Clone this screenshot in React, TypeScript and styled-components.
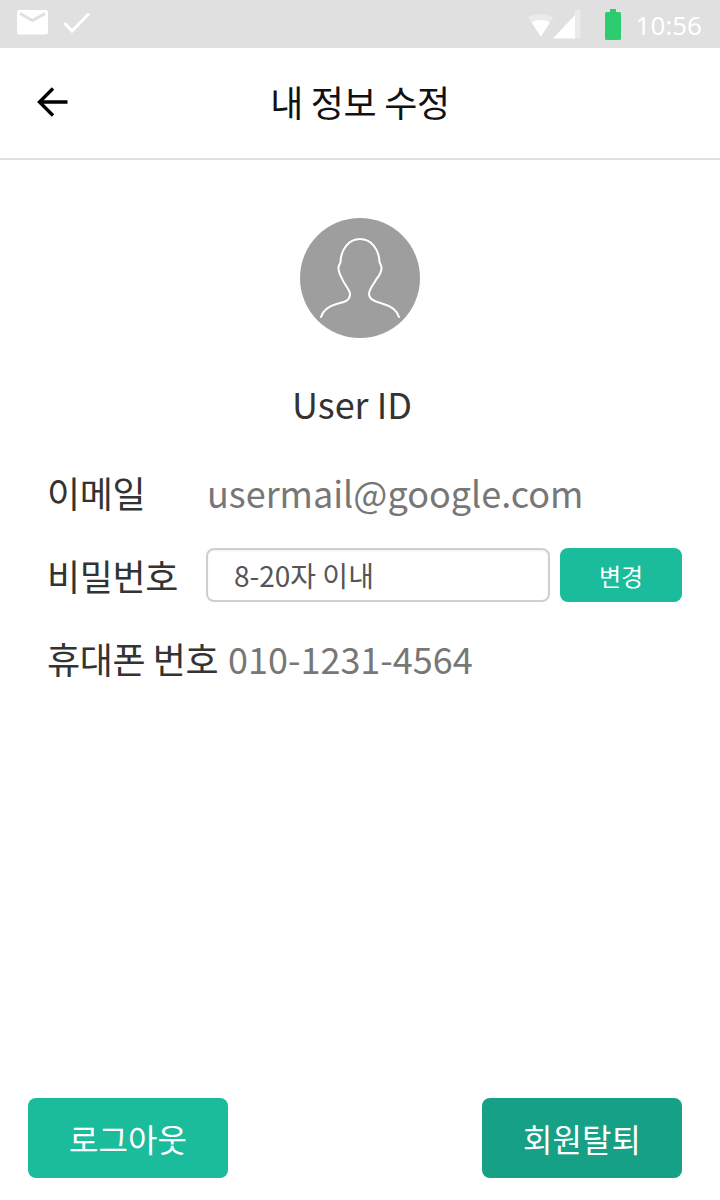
import React from "react";
import styled, { createGlobalStyle } from "styled-components";

const Global = createGlobalStyle`
  html, body { margin: 0; padding: 0; background: #fff; }
  * { box-sizing: border-box; }
`;
const Font = `"Noto Sans CJK KR", "Noto Sans", sans-serif`;

const Page = styled.div`
  width: 720px; height: 1200px; display: flex; flex-direction: column;
  font-family: ${Font}; background: #fff; overflow: hidden;
`;
const StatusBar = styled.div`
  height: 48px; background: #e0e0e0; display: flex; align-items: center;
  justify-content: space-between; padding: 0 18px 0 17px; flex: none;
`;
const StatusGroup = styled.div`display: flex; align-items: center;`;
const Clock = styled.span`
  font-family: "Noto Sans", sans-serif; font-size: 26px; color: #fff; line-height: 48px; margin-left: 15px; margin-top:2px;
`;
const Header = styled.header`
  height: 112px; flex: none; border-bottom: 2px solid #e0e0e0; display: flex; align-items: center;
  justify-content: center; position: relative; padding-bottom: 4px;
`;
const BackButton = styled.div`position: absolute; left: 36px; top: 37px; width: 34px; height: 34px; display: flex;`;
const Title = styled.h1`
  margin: 0 0 0 0; font-size: 36px; font-weight: 400; color: #111; line-height: 1; letter-spacing: -0.3px;
`;
const Profile = styled.section`
  display: flex; flex-direction: column; align-items: center; padding-top: 58px; flex: none;
`;
const Avatar = styled.div`
  width: 120px; height: 120px; border-radius: 50%; background: #9e9e9e; display: flex;
`;
const UserId = styled.div`
  font-size: 36px; color: #333; line-height: 50px; margin-top: 40px; margin-right: 16px;
`;
const Form = styled.div`display: flex; flex-direction: column; padding: 0 38px 0 47px; margin-top: 19px; flex: none;`;
const Row = styled.div<{ $h: number }>`display: flex; align-items: center; height: ${(p) => p.$h}px;`;
const Label = styled.div<{ $w: number }>`
  width: ${(p) => p.$w}px; flex: none; font-size: 36px; color: #333; white-space: nowrap; line-height: 50px; letter-spacing: -0.4px;
`;
const Value = styled.div`font-size: 36px; color: #777; line-height: 50px; white-space: nowrap;`;
const PasswordBox = styled.div`
  width: 344px; height: 54px; border: 2px solid #cfcfcf; border-radius: 8px; background: #fff;
  font-size: 28px; color: #555; display: flex; align-items: center; padding-left: 26px;
  box-shadow: inset 0 1px 2px rgba(0,0,0,0.06);
`;
const SmallButton = styled.div`
  width: 122px; height: 54px; margin-left: 10px; background: #1abc9c; border-radius: 8px; color: #fff;
  font-size: 24px; display: flex; align-items: center; justify-content: center;
`;
const Footer = styled.footer`
  margin-top: auto; display: flex; justify-content: space-between; padding: 0 38px 22px 28px;
`;
const ActionButton = styled.div<{ $bg: string }>`
  width: 200px; height: 80px; border-radius: 8px; background: ${(p) => p.$bg}; color: #fff;
  font-size: 32px; display: flex; align-items: center; justify-content: center;
`;

export default function App() {
  return (
    <Page>
      <Global />
      <StatusBar>
        <StatusGroup>
          <svg width="31" height="25" viewBox="0 0 31 25" style={{ marginTop: -4 }}>
            <rect x="0" y="0" width="31" height="24.5" rx="2.5" fill="#fff" />
            <path d="M3 3.5 L15.5 10.5 L28 3.5" fill="none" stroke="#e0e0e0" strokeWidth="3" />
          </svg>
          <svg width="28" height="22" viewBox="0 0 28 22" style={{ marginLeft: 15, marginTop: -2 }}>
            <path d="M1.5 11 L9 19 L26 1.5" fill="none" stroke="#fff" strokeWidth="3" />
          </svg>
        </StatusGroup>
        <StatusGroup>
          <svg width="64" height="30" viewBox="0 0 64 30">
            <path d="M0 8 A30 30 0 0 1 25.5 8 L12.75 27 Z" fill="#fff" fillOpacity="0.35" transform="translate(0,0)" />
            <path d="M3.5 13.5 A20 20 0 0 1 22 13.5 L12.75 27.5 Z" fill="#fff" />
            <path d="M25 29.5 L47 6 V29.5 Z" fill="#fff" />
            <path d="M47 0.5 L52.5 0.5 V29.5 H47 Z" fill="#fff" fillOpacity="0.35" />
          </svg>
          <svg width="16" height="31" viewBox="0 0 16 31" style={{ marginLeft: 13, marginTop: 1 }}>
            <path d="M5 0 H11 V3 H14.5 A1.5 1.5 0 0 1 16 4.5 V29.5 A1.5 1.5 0 0 1 14.5 31 H1.5 A1.5 1.5 0 0 1 0 29.5 V4.5 A1.5 1.5 0 0 1 1.5 3 H5 Z" fill="#2ecc71" />
          </svg>
          <Clock>10:56</Clock>
        </StatusGroup>
      </StatusBar>
      <Header>
        <BackButton>
          <svg width="34" height="34" viewBox="0 0 34 34">
            <path d="M31.5 17 H5 M17 3.5 L3.5 17 L17 30.5" fill="none" stroke="#000" strokeWidth="3.4" />
          </svg>
        </BackButton>
        <Title>내 정보 수정</Title>
      </Header>
      <Profile>
        <Avatar>
          <svg width="120" height="120" viewBox="0 0 120 120">
            <path
              d="M21 99 C23 92 29 88 38 85.5 C44 84 50 83 50 76 C50 71.5 45 68 42 60.5 C40 56.5 38 53 38.5 49 C39 47 40 46 40.5 44 C41 31 49 21 60 21 C71 21 79 31 79.5 44 C80 46 81.5 47 81.5 50 C81.5 54 79 58 76.5 61 C74 66 69 71 69 76 C69 82 76 84 82 85.5 C91 88 97 92 99 99"
              fill="none" stroke="#fff" strokeWidth="2" strokeLinecap="round"
            />
          </svg>
        </Avatar>
        <UserId>User ID</UserId>
      </Profile>
      <Form>
        <Row $h={90}>
          <Label $w={160}>이메일</Label>
          <Value>usermail@google.com</Value>
        </Row>
        <Row $h={76}>
          <Label $w={159}>비밀번호</Label>
          <PasswordBox>8-20자 이내</PasswordBox>
          <SmallButton>변경</SmallButton>
        </Row>
        <Row $h={90}>
          <Label $w={181}>휴대폰 번호</Label>
          <Value>010-1231-4564</Value>
        </Row>
      </Form>
      <Footer>
        <ActionButton $bg="#1abc9c">로그아웃</ActionButton>
        <ActionButton $bg="#16a085">회원탈퇴</ActionButton>
      </Footer>
    </Page>
  );
}
